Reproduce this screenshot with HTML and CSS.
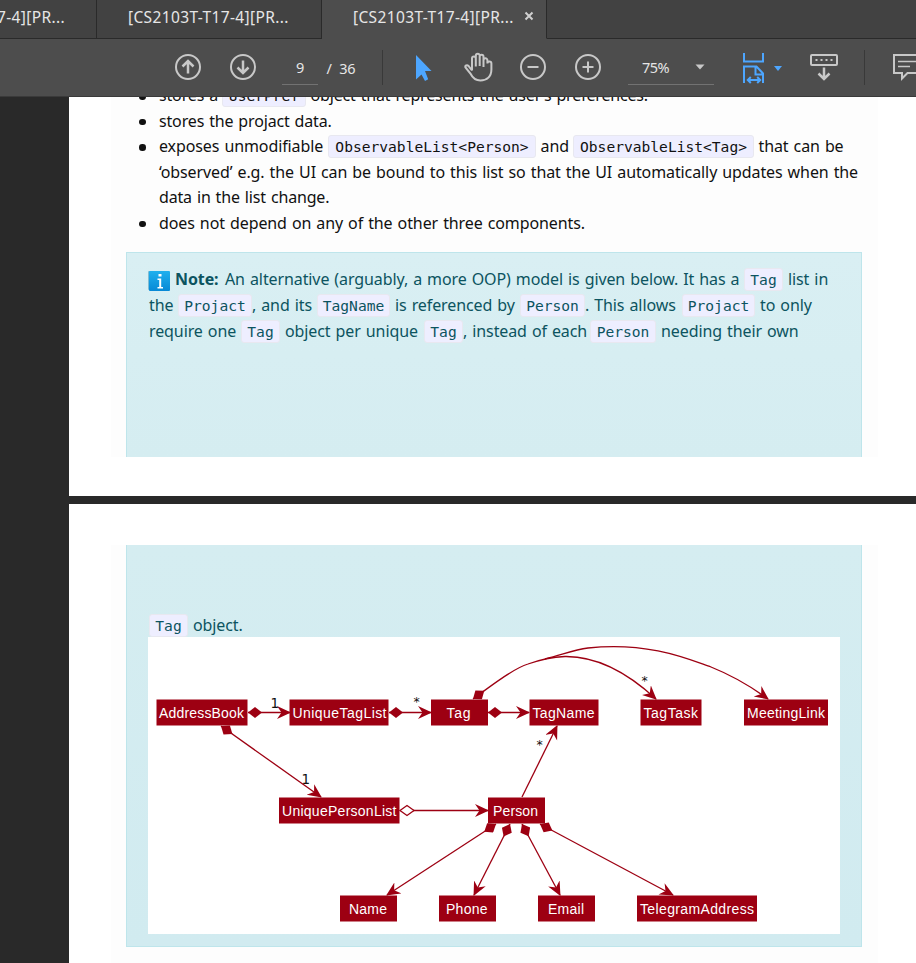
FILE: index.html
```html
<!DOCTYPE html>
<html lang="en">
<head>
<meta charset="utf-8">
<title>Developer Guide</title>
<link rel="stylesheet" href="styles.css">
</head>
<body>
<nav class="tabs">
  <div class="tab first"><span class="tab-label">[CS2103T-T17-4][PR...</span></div>
  <div class="tab second"><span class="tab-label">[CS2103T-T17-4][PR...</span></div>
  <div class="tab active"><span class="tab-label">[CS2103T-T17-4][PR...</span>
    <svg class="close" width="10" height="10" viewBox="0 0 10 10"><path d="M1.500 1.500l7 7M8.500 1.500l-7 7"/></svg></div>
  <div class="tab-rest"></div>
</nav>
<header class="toolbar">
  <svg class="ic up" width="28" height="28" viewBox="0 0 28 28"><circle cx="14" cy="14" r="12"/><path d="M14 20.500V8.500M8.500 13.500L14 8l5.500 5.500" class="thick"/></svg>
  <svg class="ic down" width="28" height="28" viewBox="0 0 28 28"><circle cx="14" cy="14" r="12"/><path d="M14 7.500v12M8.500 14.500L14 20l5.500-5.500" class="thick"/></svg>
  <div class="page-num">9</div>
  <div class="page-total">/&nbsp; 36</div>
  <div class="sep"></div>
  <svg class="cursor" width="18" height="28" viewBox="0 0 18 28"><path d="M1 1v24.500l5.500-5 3.500 6.500 3.200-1.800-3.200-8.200h6.500z"/></svg>
  <svg class="ic hand" width="30" height="30" viewBox="0 0 30 30"><path d="M8.500 18.500V6.300a1.900 1.900 0 0 1 3.800 0V14.500M12.300 14V3.700a1.900 1.900 0 0 1 3.900 0V14M16.200 14V4.700a1.900 1.900 0 0 1 3.800 0V15M20 14.500V8.300a1.900 1.900 0 0 1 3.900 0V8 11.500a1.900 1.900 0 0 1 4 0V17.500c0 7-4.500 11-11 11-5.500 0-8-3-10-7L2 15.500c-.8-1.800 1.500-3 3-1.500l3.500 4.500" transform="translate(-.5 0)"/></svg>
  <svg class="ic minus" width="28" height="28" viewBox="0 0 28 28"><circle cx="14" cy="14" r="12"/><path d="M8.500 14h11"/></svg>
  <svg class="ic plus" width="28" height="28" viewBox="0 0 28 28"><circle cx="14" cy="14" r="12"/><path d="M8.500 14h11M14 8.500v11"/></svg>
  <div class="zoom-box"><span class="zoom-label">75%</span><svg width="10" height="6" viewBox="0 0 10 6"><path d="M.5.500h9L5 5.500z" fill="#c8c8c8"/></svg></div>
  <svg class="fit" width="40" height="32" viewBox="0 0 40 32"><path d="M2 1v8.500h19V1M2 31V14.500h12.500l6.500 7V31M13.500 15v7.500H21M5.500 28h13M8.800 25l-3 3 3 3M15.200 25l3 3-3 3"/><path d="M32 14h8l-4 5z" class="solid"/></svg>
  <svg class="ic keyboard" width="30" height="30" viewBox="0 0 30 30"><rect x="2" y="3" width="26" height="10" rx="1"/><path d="M15 15.500v11M9.500 21.500l5.500 5.500 5.500-5.500" class="thick"/><path d="M6.500 8h2M11.500 8h2M16.500 8h2M21.500 8h2"/></svg>
  <div class="sep sep2"></div>
  <svg class="ic comment" width="24" height="30" viewBox="0 0 24 30"><path d="M2 3h26v18H15.500L10 26.500V21H2z"/><path d="M6 9.500h20M6 14.500h12" class="thin"/></svg>
</header>
<main class="viewer">
  <section class="page page-one">
    <article class="content">
      <ul class="points">
        <li><div class="line a"><span>stores a</span><code>UserPref</code><span>object that represents the user’s preferences.</span></div></li>
        <li><div class="line b">stores the projact data.</div></li>
        <li><div class="line c"><span>exposes unmodifiable</span><code>ObservableList&lt;Person&gt;</code><span>and</span><code>ObservableList&lt;Tag&gt;</code><span>that can be</span></div>
          <div class="line d">‘observed’ e.g. the UI can be bound to this list so that the UI automatically updates when the</div>
          <div class="line e">data in the list change.</div></li>
        <li><div class="line f">does not depend on any of the other three components.</div></li>
      </ul>
      <div class="note note-top">
        <div class="line g"><svg class="info" width="22" height="22" viewBox="0 0 22 22"><defs><linearGradient id="blue" x2="0" y2="1"><stop stop-color="#20b0ee"/><stop offset="1" stop-color="#0789d6"/></linearGradient></defs><rect y="1" width="20" height="19" rx="1" fill="#83bdd2"/><rect x="1" y="1" width="21" height="20" rx="1" fill="url(#blue)"/><path d="M10.500 4h3v2.500h-3zM9.500 8.500h3.700v8.500H15v1.500H9.500V17h1.700v-7H9.500z" fill="#fff"/></svg><b>Note:</b><span>An alternative (arguably, a more OOP) model is given below. It has a</span><code>Tag</code><span>list in</span></div>
        <div class="line h"><span>the</span><code>Projact</code><span>, and its</span><code>TagName</code><span>is referenced by</span><code>Person</code><span>. This allows</span><code>Projact</code><span>to only</span></div>
        <div class="line i"><span>require one</span><code>Tag</code><span>object per unique</span><code>Tag</code><span>, instead of each</span><code>Person</code><span>needing their own</span></div>
      </div>
    </article>
  </section>
  <section class="page page-two">
    <article class="content">
      <div class="note note-bottom">
        <div class="line j"><code>Tag</code><span>object.</span></div>
        <svg class="diagram" width="692" height="297" viewBox="148 637 692 297">
          <defs>
            <marker id="arrow" markerUnits="userSpaceOnUse" markerWidth="16" markerHeight="14" refX="13" refY="6.500" orient="auto"><path d="M0 0L14 6.500L0 13L4.500 6.500z" fill="#9d0012"/></marker>
            <marker id="gem" markerUnits="userSpaceOnUse" markerWidth="16" markerHeight="12" refX="0" refY="5.500" orient="auto"><path d="M0 5.500L7 0L14 5.500L7 11z" fill="#9d0012"/></marker>
          </defs>
          <g class="links">
            <path d="M248 712.500H290"/><path d="M389 712.500H431"/><path d="M488 712.500H529"/>
            <path d="M221 726L321 797"/>
            <path class="open" d="M413 810.500H488"/>
            <path class="open" d="M522 797L557 726"/>
            <path d="M496 824L387 895"/><path d="M510 824L474 895"/><path d="M522 824L560 895"/><path d="M540 824L673 895"/>
            <path d="M473 699C496 682 515 668 528 664C545 658 555 657 565 656.500C600 656 630 675 656 699"/>
            <path class="bare" d="M545 659C562 655 573 650 588 648C650 641 693 661 711 667C731 675 749 685 768 699"/>
            <path class="hollow" d="M400 810.500l7-5 7 5-7 5z"/>
          </g>
          <g class="boxes">
            <rect x="156.500" y="699.500" width="91" height="26"/><rect x="289.500" y="699.500" width="99" height="26"/><rect x="431" y="699.500" width="57" height="26"/><rect x="529.500" y="699.500" width="69" height="26"/><rect x="640.500" y="699.500" width="61" height="26"/><rect x="744" y="699.500" width="84" height="26"/>
            <rect x="279" y="797.500" width="120.500" height="26"/><rect x="488" y="797.500" width="57" height="26"/>
            <rect x="340" y="895.500" width="57" height="26"/><rect x="439" y="895.500" width="57" height="26"/><rect x="538" y="895.500" width="57" height="26"/><rect x="637" y="895.500" width="120" height="26"/>
          </g>
          <g class="names">
            <text x="159" y="717.500" textLength="85">AddressBook</text><text x="292.500" y="717.500" textLength="94">UniqueTagList</text><text x="446.500" y="717.500" textLength="24">Tag</text><text x="532.500" y="717.500" textLength="62">TagName</text><text x="643.500" y="717.500" textLength="54.500">TagTask</text><text x="747" y="717.500" textLength="78">MeetingLink</text>
            <text x="282" y="815.500" textLength="114.500">UniquePersonList</text><text x="493" y="815.500" textLength="45">Person</text>
            <text x="349" y="913.500" textLength="38">Name</text><text x="446" y="913.500" textLength="41.500">Phone</text><text x="548" y="913.500" textLength="36">Email</text><text x="640" y="913.500" textLength="114">TelegramAddress</text>
          </g>
          <g class="mult"><text x="270.500" y="707.500">1</text><text x="301.500" y="784">1</text><text x="413.500" y="706" class="star">*</text><text x="536.500" y="749" class="star">*</text><text x="641.500" y="685" class="star">*</text></g>
        </svg>
      </div>
    </article>
  </section>
</main>
</body>
</html>
```
FILE: styles.css
```css
* { box-sizing: border-box; }
body { margin: 0; width: 916px; height: 963px; overflow: hidden; background: #292929; font-family: "Noto Sans", "Open Sans", sans-serif; display: flex; flex-direction: column; }
svg { display: block; flex: none; }

.tabs { display: flex; height: 39px; flex: none; background: #424242; }
.tab { display: flex; align-items: center; border-right: 1px solid #2a2a2a; border-bottom: 1px solid #2a2a2a; color: #e6e6e6; font-size: 15.500px; white-space: nowrap; overflow: hidden; padding-bottom: 4px; }
.tab-label { letter-spacing: .36px; }
.first { width: 97px; justify-content: flex-end; padding-right: 31px; }
.second { width: 225px; padding-left: 31px; }
.active { width: 225px; padding-left: 31px; background: #4d4d4d; border-bottom-color: #4d4d4d; }
.tab-rest { flex: 1; border-bottom: 1px solid #2a2a2a; }
.close { margin: -2px 0 0 10px; stroke: #d0d0d0; stroke-width: 2; }

.toolbar { display: flex; align-items: center; height: 58px; flex: none; background: #4d4d4d; border-bottom: 1px solid #3a3a3a; color: #e6e6e6; font-size: 14.500px; padding-left: 174px; overflow: hidden; }
.ic { fill: none; stroke: #c8c8c8; stroke-width: 2; margin-top: -1px; }
.ic .thick { stroke-width: 2.500; }
.ic .thin { stroke-width: 1.300; }
.down { margin-left: 27px; }
.page-num { width: 36px; height: 35px; margin: 0 0 0 25px; padding: 8px 0 0 1px; text-align: center; border-bottom: 1px solid #727272; line-height: 19px; }
.page-total { margin-left: 9px; width: 47px; line-height: 20px; letter-spacing: -.1px; white-space: nowrap; }
.sep { width: 1px; height: 35px; background: #393939; margin-left: 9px; }
.cursor { margin-left: 32px; fill: #4da6ff; }
.hand { margin-left: 31px; }
.minus { margin-left: 25px; }
.plus { margin-left: 27px; }
.zoom-box { display: flex; align-items: center; width: 87px; height: 35px; margin-left: 26px; border-bottom: 1px solid #727272; padding: 0 9px 0 14px; justify-content: space-between; }
.zoom-label { letter-spacing: -.5px; }
.fit { margin-left: 28px; fill: none; stroke: #4da6ff; stroke-width: 2; }
.fit .solid { fill: #4da6ff; stroke: none; }
.keyboard { margin-left: 27px; }
.sep2 { margin-left: 25px; }
.comment { margin-left: 27px; }

.viewer { flex: 1; min-height: 0; overflow: hidden; padding-left: 69px; }
.page { background: #fff; padding: 0 38px 0 42px; }
.page-one { height: 399px; }
.page-two { height: 470px; margin-top: 8px; padding-top: 41px; }
.content { background: #fdfdfd; padding: 0 16px 0 15px; }
.page-one .content { height: 360px; overflow: hidden; }
.page-two .content { height: 430px; }

.points { list-style: none; margin: -14px 0 0; padding: 0 0 0 33px; color: #111; height: 169px; }
.points li { position: relative; }
.points li::before { content: ""; position: absolute; left: -20px; top: 10px; width: 6.500px; height: 6.500px; border-radius: 50%; background: #111; }
.line { display: grid; height: 25.600px; line-height: 25.600px; font-size: 16px; white-space: nowrap; letter-spacing: -.1px; word-spacing: 1px; }
code { font: 14.600px/20px "DejaVu Sans Mono", monospace; letter-spacing: 0; height: 23px; margin-top: 2px; padding: 1px 0 0; text-align: center; background: #eef; border: 1px solid #e8e8f0; border-radius: 3px; }
.points code { margin-top: 1px; }
.a { grid-template-columns: 63px 84px 343px; letter-spacing: -.16px; }
.b, .e { letter-spacing: -.16px; }
.a span:last-child, .c span:nth-child(3), .c span:last-child { padding-left: 4.500px; }
.c { grid-template-columns: 169px 208px 37px 181px 100px; }

.note { border: 1px solid #bee5eb; color: #0c5460; padding: 0 21px 0 22px; }
.note-top { height: 205px; border-bottom: 0; background: linear-gradient(#d9eff3, #d5edf1); padding-top: 13px; }
.note-bottom { height: 402px; border-top: 0; background: linear-gradient(#d5edf1, #d1ebf0); padding-top: 67px; padding-left: 21px; }
.note-top .line { height: 26px; line-height: 26px; }
.g { grid-template-columns: 26px 50px 519px 39px 80px; }
.info { margin: 4px 0 0 -1px; }
.g span:last-child, .h span:nth-child(5), .h span:last-child, .i span:nth-child(3), .i span:last-child, .j span { padding-left: 5px; }
.h { grid-template-columns: 29px 74px 65px 73px 130px 65px 97px 73px 80px; }
.i { grid-template-columns: 92px 39px 144px 39px 127px 66px 150px; }
.note .j { grid-template-columns: 39px 80px; padding-left: 1px; height: 25px; line-height: 27px; }
.diagram { background: #fff; }

.links path { fill: none; stroke: #9d0012; stroke-width: 1.300; marker-start: url(#gem); marker-end: url(#arrow); }
.links .open, .links .bare { marker-start: none; }
.links .hollow { marker: none; fill: #fff; }
.boxes rect { fill: #9d0012; }
.names { font: 14px "Liberation Sans", Arial, sans-serif; fill: #fff; }
.mult { font: 13.500px "DejaVu Sans", sans-serif; fill: #111; }
.mult .star { font-size: 12.500px; }
```
